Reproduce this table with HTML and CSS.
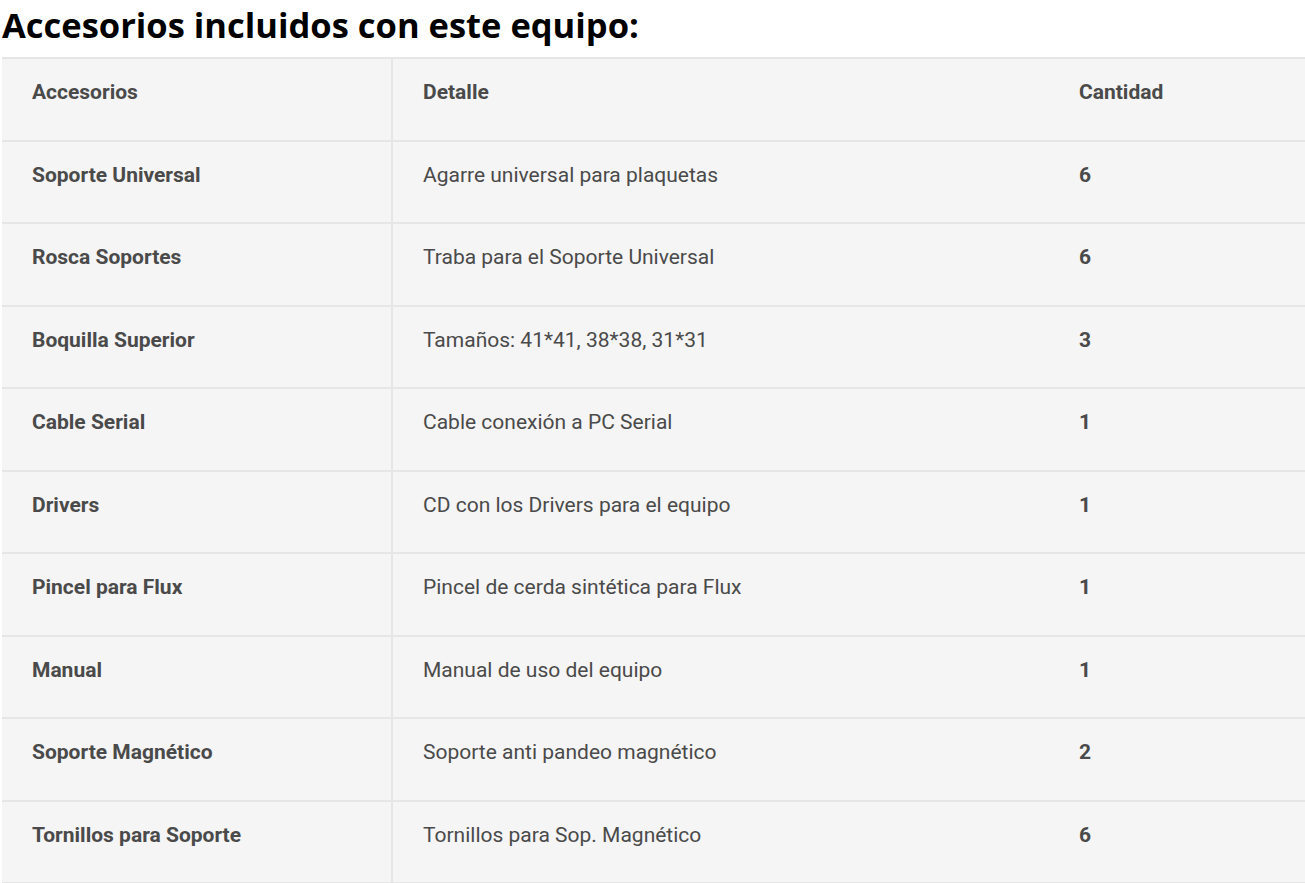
FILE: index.html
```html
<!DOCTYPE html>
<html lang="es">
<head>
<meta charset="utf-8">
<title>Accesorios</title>
<link rel="stylesheet" href="styles.css">
</head>
<body>
<h2 class="title">Accesorios incluidos con este equipo:</h2>
<table class="acc">
  <colgroup>
    <col class="c1"><col class="c2"><col class="c3">
  </colgroup>
  <thead>
    <tr><th>Accesorios</th><th>Detalle</th><th>Cantidad</th></tr>
  </thead>
  <tbody>
    <tr><td>Soporte Universal</td><td>Agarre universal para plaquetas</td><td>6</td></tr>
    <tr><td>Rosca Soportes</td><td>Traba para el Soporte Universal</td><td>6</td></tr>
    <tr><td>Boquilla Superior</td><td>Tamaños: 41*41, 38*38, 31*31</td><td>3</td></tr>
    <tr><td>Cable Serial</td><td>Cable conexión a PC Serial</td><td>1</td></tr>
    <tr><td>Drivers</td><td>CD con los Drivers para el equipo</td><td>1</td></tr>
    <tr><td>Pincel para Flux</td><td>Pincel de cerda sintética para Flux</td><td>1</td></tr>
    <tr><td>Manual</td><td>Manual de uso del equipo</td><td>1</td></tr>
    <tr><td>Soporte Magnético</td><td>Soporte anti pandeo magnético</td><td>2</td></tr>
    <tr><td>Tornillos para Soporte</td><td>Tornillos para Sop. Magnético</td><td>6</td></tr>
  </tbody>
</table>
</body>
</html>
```
FILE: styles.css
```css
html, body {
  margin: 0;
  padding: 0;
  background: #ffffff;
}
.title {
  font-family: "Open Sans", "Liberation Sans", sans-serif;
  font-weight: 700;
  font-size: 34.5px;
  line-height: 46px;
  color: #000000;
  margin: 2px 0 9px 2px;
}
.acc {
  margin-left: 2px;
  width: 1303px;
  border-collapse: collapse;
  table-layout: fixed;
  background: #f5f5f5;
  font-family: Roboto, "Liberation Sans", sans-serif;
  font-size: 21px;
  line-height: 24px;
  color: #4a4a4a;
  border-top: 2px solid #e6e6e6;
}
.c1 { width: 390px; }
.c2 { width: 657px; }
.c3 { width: 256px; }
.acc th, .acc td {
  text-align: left;
  vertical-align: top;
  padding: 21px 30px 0 30px;
  height: 82.5px;
  box-sizing: border-box;
  border-bottom: 2px solid #e6e6e6;
}
.acc th { font-weight: 700; }
.acc td { font-weight: 400; }
.acc td:first-child, .acc td:last-child { font-weight: 700; }
.acc th:first-child, .acc td:first-child {
  border-right: 2px solid #e6e6e6;
}
```
